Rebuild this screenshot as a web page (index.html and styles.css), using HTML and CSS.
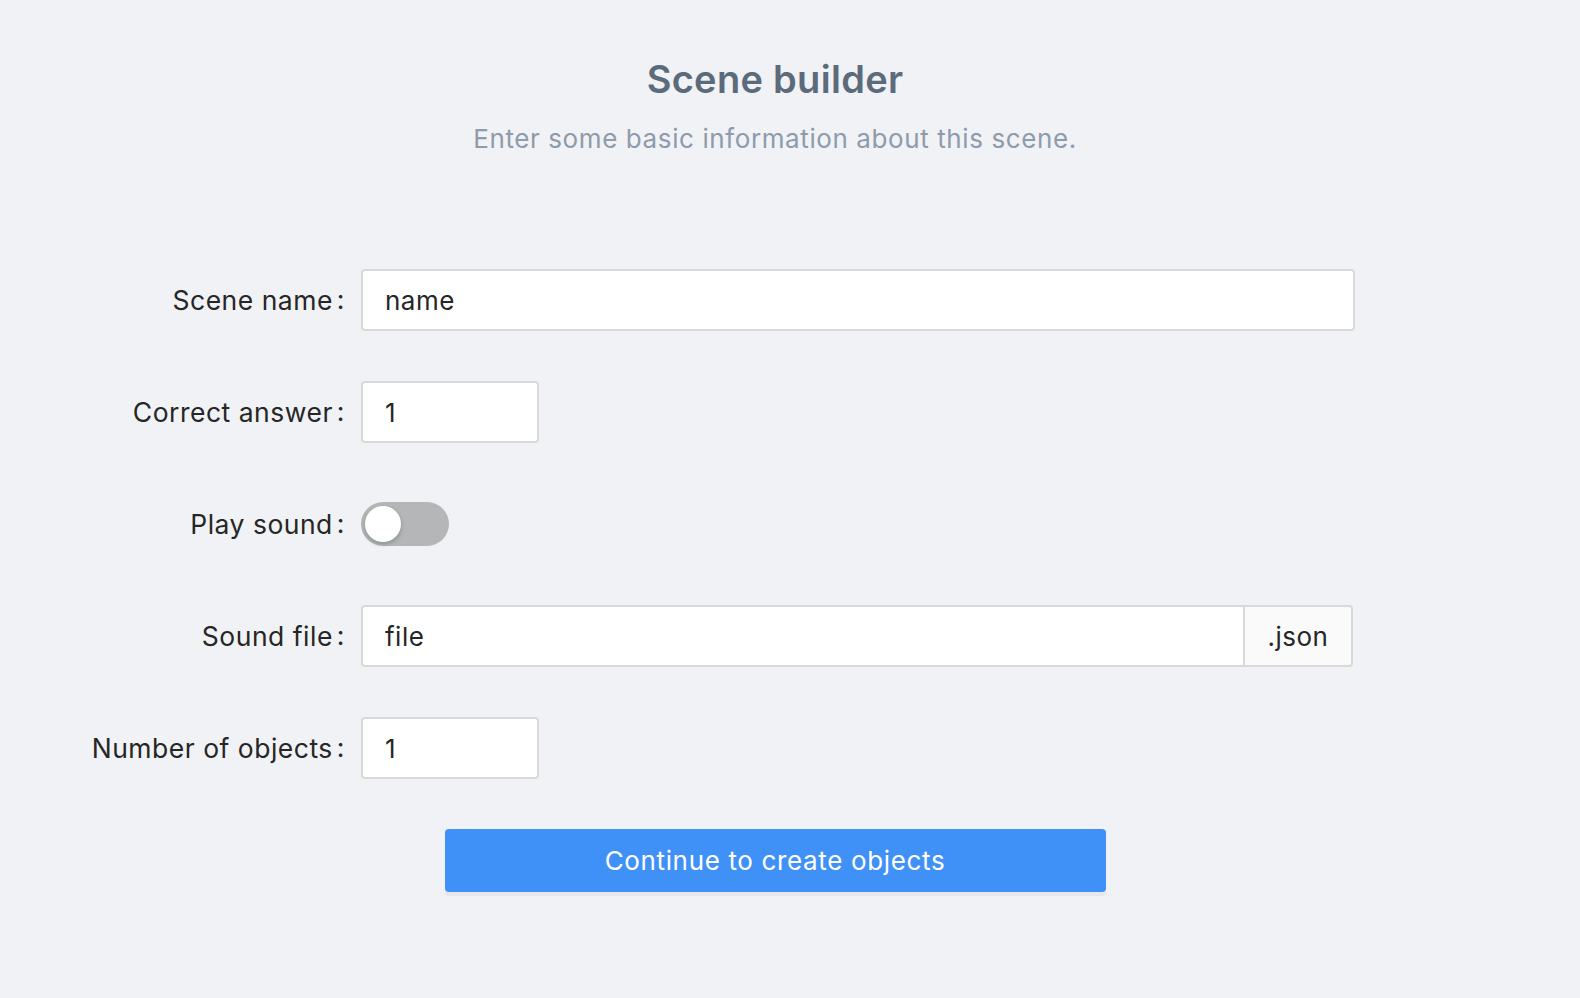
FILE: index.html
```html
<!DOCTYPE html>
<html lang="en">
<head>
<meta charset="utf-8">
<title>Scene builder</title>
<link rel="stylesheet" href="styles.css">
</head>
<body>
<div class="page">
  <header class="header">
    <h1 class="title">Scene builder</h1>
    <p class="subtitle">Enter some basic information about this scene.</p>
  </header>
  <form class="form">
    <div class="row">
      <label class="label">Scene name<span class="colon">:</span></label>
      <div class="control"><input class="input input-wide" type="text" value="name"></div>
    </div>
    <div class="row">
      <label class="label">Correct answer<span class="colon">:</span></label>
      <div class="control"><input class="input input-small" type="text" value="1"></div>
    </div>
    <div class="row">
      <label class="label">Play sound<span class="colon">:</span></label>
      <div class="control"><span class="switch"><span class="knob"></span></span></div>
    </div>
    <div class="row">
      <label class="label">Sound file<span class="colon">:</span></label>
      <div class="control">
        <div class="group">
          <input class="input input-group" type="text" value="file">
          <span class="addon">.json</span>
        </div>
      </div>
    </div>
    <div class="row">
      <label class="label">Number of objects<span class="colon">:</span></label>
      <div class="control"><input class="input input-small" type="text" value="1"></div>
    </div>
    <div class="actions">
      <button class="btn" type="button">Continue to create objects</button>
    </div>
  </form>
</div>
</body>
</html>
```
FILE: styles.css
```css
html, body {
  margin: 0;
  padding: 0;
  background: #f0f2f5;
}
body {
  font-family: Inter, "Noto Sans", "Liberation Sans", sans-serif;
  color: #262626;
  height: 998px;
  overflow: hidden;
}
.page {
  width: 1550px;
}
.header {
  text-align: center;
  padding-top: 55px;
}
.title {
  margin: 0;
  font-size: 38px;
  line-height: 48px;
  font-weight: 600;
  color: #5c6b7b;
  letter-spacing: 0.3px;
}
.subtitle {
  margin: 20px 0 0;
  font-size: 26px;
  line-height: 32px;
  color: #8e9bab;
  letter-spacing: 0.6px;
}
.form {
  margin-top: 114px;
}
.row {
  display: grid;
  grid-template-columns: 361px 994px;
  height: 62px;
  margin-bottom: 50px;
  align-items: center;
}
.label {
  justify-self: end;
  font-size: 26.5px;
  letter-spacing: 0.5px;
  color: #262626;
  display: flex;
  align-items: center;
  white-space: nowrap;
}
.colon {
  margin: 0 16px 0 4px;
  position: relative;
  top: -1px;
}
.control {
  display: flex;
  align-items: center;
  height: 62px;
}
.input {
  box-sizing: border-box;
  height: 62px;
  border: 2px solid #d9d9d9;
  border-radius: 4px;
  background: #fff;
  font-family: inherit;
  font-size: 26px;
  letter-spacing: 0.5px;
  color: #262626;
  padding: 0 22px;
  outline: none;
  margin: 0;
}
.input-wide {
  width: 994px;
}
.input-small {
  width: 178px;
}
.group {
  display: flex;
  width: 992px;
  height: 62px;
}
.input-group {
  flex: 1;
  min-width: 0;
  border-radius: 4px 0 0 4px;
}
.addon {
  box-sizing: border-box;
  width: 108px;
  height: 62px;
  border: 2px solid #d9d9d9;
  border-left: 0;
  border-radius: 0 4px 4px 0;
  background: #fafafa;
  display: flex;
  align-items: center;
  justify-content: center;
  font-size: 26px;
  letter-spacing: 0.5px;
  color: #262626;
}
.switch {
  position: relative;
  display: inline-block;
  width: 88px;
  height: 44px;
  border-radius: 22px;
  background: #b4b6b8;
}
.knob {
  position: absolute;
  left: 4px;
  top: 4px;
  width: 36px;
  height: 36px;
  border-radius: 50%;
  background: #fff;
  box-shadow: 0 2px 4px rgba(0, 35, 11, 0.25);
}
.actions {
  display: flex;
  justify-content: center;
}
.btn {
  width: 661px;
  height: 63px;
  border: 0;
  border-radius: 4px;
  background: #4091f7;
  color: #fff;
  font-family: inherit;
  font-size: 26px;
  letter-spacing: 0.65px;
  box-shadow: 0 4px 0 rgba(0, 0, 0, 0.045);
  cursor: pointer;
}
```
